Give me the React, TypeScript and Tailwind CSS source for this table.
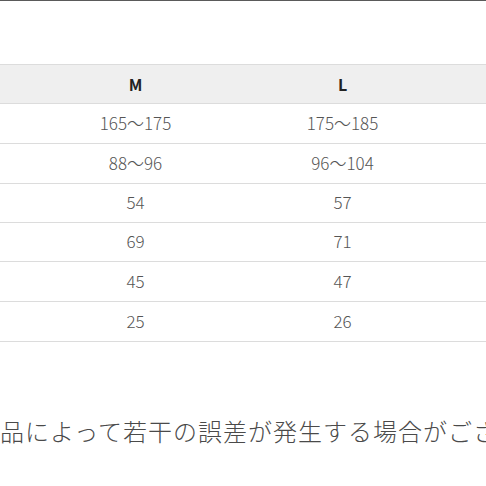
import React from "react";

const rows: { id: string; m: string; l: string; h: string }[] = [
  { id: "a", m: "165〜175", l: "175〜185", h: "h-[40px]" },
  { id: "b", m: "88〜96", l: "96〜104", h: "h-[40px]" },
  { id: "c", m: "54", l: "57", h: "h-[39px]" },
  { id: "d", m: "69", l: "71", h: "h-[39px]" },
  { id: "e", m: "45", l: "47", h: "h-[40px]" },
  { id: "f", m: "25", l: "26", h: "h-[40px]" },
];

export default function App() {
  return (
    <div
      className="w-[486px] h-[486px] bg-white overflow-hidden flex flex-col"
      style={{ fontFamily: '"Noto Sans CJK JP", "Noto Sans", sans-serif' }}
    >
      <div className="h-px bg-[#5a5a5a] shrink-0" />
      <div className="h-[63px] shrink-0" />
      <div className="ml-[-175px] flex flex-col shrink-0">
        <div className="flex h-[40px] bg-[#efefef] border-y border-[#dcdcdc] text-[16px] font-bold text-[#222] w-[900px]">
          <div className="w-[207px]" />
          <div className="w-[207px] flex items-center justify-center">M</div>
          <div className="w-[207px] flex items-center justify-center">L</div>
          <div className="w-[207px]" />
        </div>
        {rows.map((r) => (
          <div
            key={r.id}
            className={`flex ${r.h} border-b border-[#dcdcdc] text-[17px] font-light text-[#555] w-[900px]`}
          >
            <div className="w-[207px]" />
            <div className="w-[207px] flex items-center justify-center pb-[2px]">{r.m}</div>
            <div className="w-[207px] flex items-center justify-center pb-[2px]">{r.l}</div>
            <div className="w-[207px]" />
          </div>
        ))}
      </div>
      <div className="mt-[71px] ml-[-25px] whitespace-nowrap text-[24px] leading-[36px] tracking-[1px] font-light text-[#4a4a4a]">
        商品によって若干の誤差が発生する場合がございます。
      </div>
    </div>
  );
}
